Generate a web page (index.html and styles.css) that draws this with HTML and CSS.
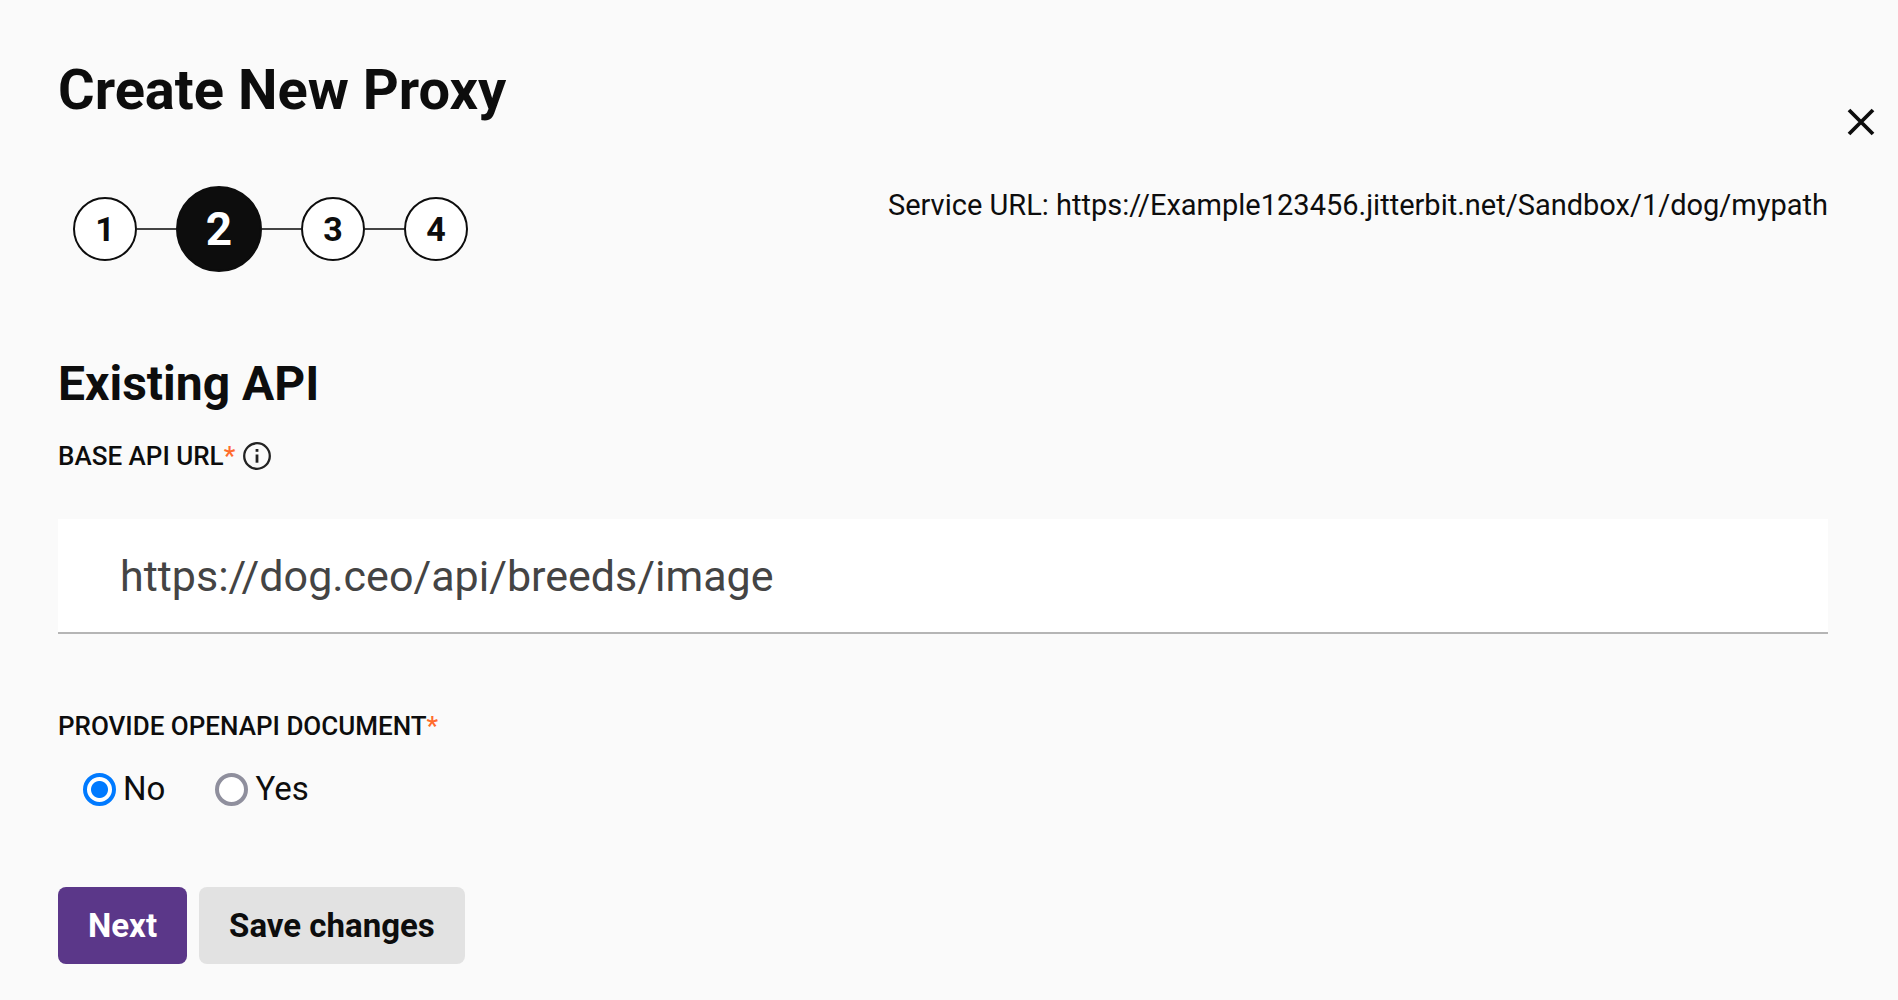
FILE: index.html
```html
<!DOCTYPE html>
<html lang="en">
<head>
<meta charset="utf-8">
<title>Create New Proxy</title>
<link rel="stylesheet" href="styles.css">
</head>
<body>
<main class="page">
  <header class="header">
    <h1 class="title">Create New Proxy</h1>
    <button class="close" type="button" aria-label="Close">
      <svg width="28" height="28" viewBox="0 0 28 28"><path d="M2 2L26 26M26 2L2 26" stroke="#0d0d0d" stroke-width="3.8" fill="none"/></svg>
    </button>
  </header>
  <div class="progress">
    <ol class="steps">
      <li class="step"><span class="dot">1</span></li>
      <li class="step" aria-current="step"><span class="dot current">2</span></li>
      <li class="step"><span class="dot">3</span></li>
      <li class="step"><span class="dot">4</span></li>
    </ol>
    <p class="service">Service URL: https://Example123456.jitterbit.net/Sandbox/1/dog/mypath</p>
  </div>
  <form class="form">
    <h2 class="subtitle">Existing API</h2>
    <div class="caption field-caption">
      <label for="base-url">BASE API URL<span class="required">*</span></label>
      <svg class="info" width="28" height="28" viewBox="0 0 28 28"><circle cx="14" cy="14" r="12.8" fill="none" stroke="#222" stroke-width="2.3"/><path d="M14 12.5V20.7" stroke="#222" stroke-width="2.8"/><path d="M14 7V9.8" stroke="#222" stroke-width="2.8"/></svg>
    </div>
    <input class="url" id="base-url" type="text" value="https://dog.ceo/api/breeds/image">
    <fieldset class="choice">
      <legend class="caption">PROVIDE OPENAPI DOCUMENT<span class="required">*</span></legend>
      <div class="options">
        <label class="option"><input class="radio" type="radio" name="openapi" checked>No</label>
        <label class="option"><input class="radio" type="radio" name="openapi">Yes</label>
      </div>
    </fieldset>
    <div class="actions">
      <button class="button primary" type="button">Next</button>
      <button class="button" type="button">Save changes</button>
    </div>
  </form>
</main>
</body>
</html>
```
FILE: styles.css
```css
* { box-sizing: border-box; }
body { margin: 0; background: #fafafa; color: #0d0d0d; font-family: Roboto, sans-serif; }
.page { padding: 56px 70px 36px 58px; }
.header { display: flex; justify-content: space-between; align-items: flex-start; }
.title { margin: 0; font-size: 56px; line-height: 68px; font-weight: 700; }
.close { margin: 52px -47px 0 0; padding: 0; border: 0; background: none; line-height: 0; }
.progress { display: flex; justify-content: space-between; align-items: flex-start; margin-top: 50px; }
.steps { display: flex; align-items: center; margin: 0; padding: 0 0 0 15px; list-style: none; }
.step { display: flex; align-items: center; }
.step + .step::before { content: ""; width: 39px; height: 2px; background: #444; }
.dot { display: flex; align-items: center; justify-content: center; width: 64px; height: 64px; border: 2px solid #0d0d0d; border-radius: 50%; background: #fff; font-size: 34px; font-weight: 700; }
.current { width: 86px; height: 86px; background: #0d0d0d; color: #fff; font-size: 46px; }
.service { margin: 0; font-size: 29px; line-height: 38px; }
.subtitle { margin: 84px 0 28px; font-size: 48px; line-height: 56px; font-weight: 700; }
.caption { padding: 0; font-size: 26px; line-height: 32px; font-weight: 500; }
.field-caption { display: flex; align-items: center; gap: 8px; }
.required { color: #ff6b2c; }
.url { display: block; width: 100%; height: 115px; margin-top: 47px; padding: 0 62px; border: 0; border-bottom: 2px solid #b5b5b5; background: #fff; color: #444; font: 400 43px Roboto, sans-serif; }
.choice { margin: 76px 0 0; padding: 0; border: 0; }
.options { display: flex; gap: 50px; padding: 27px 0 0 25px; }
.option { display: flex; align-items: center; gap: 7px; font-size: 33px; line-height: 40px; }
.radio { appearance: none; width: 33px; height: 33px; margin: 0; border: 4px solid #8f8f9d; border-radius: 50%; background: #fff; }
.radio:checked { border-color: #007aff; background: radial-gradient(circle, #007aff 8px, #fff 9px); }
.actions { display: flex; gap: 12px; margin-top: 78px; }
.button { height: 77px; padding: 0 30px; border: 0; border-radius: 8px; background: #e2e2e2; color: #0d0d0d; font: 700 33px Roboto, sans-serif; }
.primary { background: #5b3789; color: #fff; }
```
